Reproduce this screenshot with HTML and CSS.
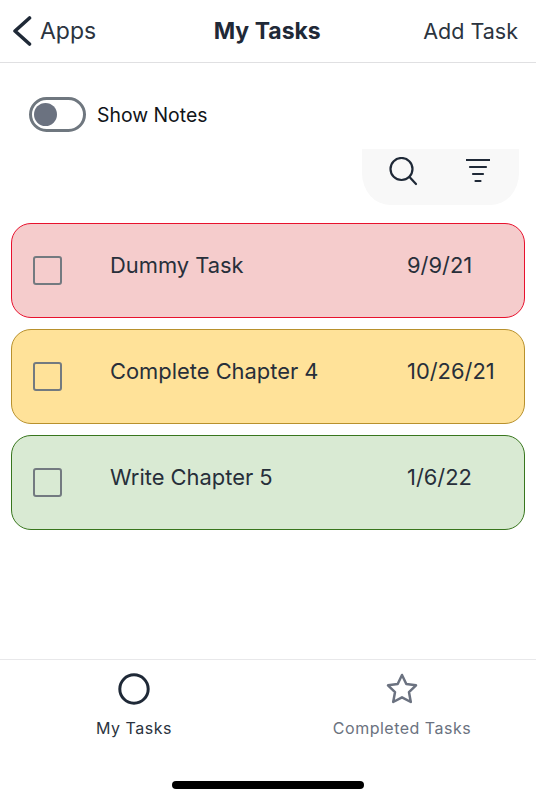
FILE: index.html
```html
<!DOCTYPE html>
<html lang="en">
<head>
  <meta charset="UTF-8">
  <meta name="viewport" content="width=device-width, initial-scale=1.0">
  <title>My Tasks</title>
  <link rel="stylesheet" href="styles.css">
</head>
<body>
  <div class="screen">
    <header class="nav-bar">
      <div class="nav-back">
        <svg class="back-icon" width="20" height="32" viewBox="0 0 20 32"><path d="M17.500 3 L3 16 L17.500 29" /></svg>
        <span>Apps</span>
      </div>
      <div class="nav-title">My Tasks</div>
      <div class="nav-action">Add Task</div>
    </header>

    <main class="content">
      <div class="notes-row">
        <div class="toggle"><div class="toggle-knob"></div></div>
        <span class="notes-label">Show Notes</span>
      </div>

      <div class="tools-row">
        <div class="tools-pill">
          <svg width="30" height="30" viewBox="0 0 30 30"><circle cx="13.500" cy="12" r="11" /><path d="M21.500 20 L28 27" /></svg>
          <svg width="24" height="26" viewBox="0 0 24 26"><path d="M0.500 3 H23.500 M4 10 H20 M7 17 H17 M9.500 24 H14.500" /></svg>
        </div>
      </div>

      <div class="task-list">
        <div class="task task-red">
          <div class="checkbox"></div>
          <div class="task-name">Dummy Task</div>
          <div class="task-date">9/9/21</div>
        </div>
        <div class="task task-yellow">
          <div class="checkbox"></div>
          <div class="task-name">Complete Chapter 4</div>
          <div class="task-date">10/26/21</div>
        </div>
        <div class="task task-green">
          <div class="checkbox"></div>
          <div class="task-name">Write Chapter 5</div>
          <div class="task-date">1/6/22</div>
        </div>
      </div>
    </main>

    <footer class="tab-bar">
      <div class="tabs">
        <div class="tab tab-active">
          <svg width="32" height="32" viewBox="0 0 32 32"><circle cx="16" cy="16" r="14.200" /></svg>
          <span>My Tasks</span>
        </div>
        <div class="tab">
          <svg width="34" height="32" viewBox="0 0 34 32"><path d="M17 2 L21.300 11 L31 12.300 L24 19.200 L25.800 29 L17 24.300 L8.200 29 L10 19.200 L3 12.300 L12.700 11 Z" /></svg>
          <span>Completed Tasks</span>
        </div>
      </div>
      <div class="home-bar"></div>
    </footer>
  </div>
</body>
</html>
```

FILE: styles.css
```css
body {
  margin: 0;
  background: white;
  font-family: Inter, "Liberation Sans", sans-serif;
  color: #1f2937;
}
svg {
  display: block;
  fill: none;
  stroke: #1f2937;
}
.screen {
  width: 536px;
  height: 796px;
  display: flex;
  flex-direction: column;
  overflow: hidden;
}

.nav-bar {
  height: 62px;
  box-sizing: content-box;
  border-bottom: 1px solid #e0e0e2;
  display: flex;
  align-items: center;
  justify-content: space-between;
  padding: 0 18px 0 12px;
  font-size: 23px;
}
.nav-back {
  display: flex;
  align-items: center;
  gap: 8px;
  color: #2b3440;
}
.back-icon path {
  stroke-width: 3.600;
  stroke-linecap: round;
  stroke-linejoin: round;
}
.nav-title {
  font-weight: 700;
  font-size: 23px;
  margin-left: 15px;
}
.nav-action {
  font-size: 21.500px;
  color: #2b3440;
}

.content {
  flex: 1;
  padding: 0 11px;
}
.notes-row {
  display: flex;
  align-items: center;
  gap: 11px;
  margin: 34px 0 0 18px;
}
.toggle {
  width: 57px;
  height: 35px;
  box-sizing: border-box;
  border: 3px solid #6f777f;
  border-radius: 18px;
  padding: 3px 0 0 2px;
}
.toggle-knob {
  width: 23px;
  height: 23px;
  border-radius: 50%;
  background: #6b7280;
}
.notes-label {
  font-size: 19.400px;
  color: #111418;
}

.tools-row {
  display: flex;
  justify-content: flex-end;
  margin: 17px 6px 0 0;
}
.tools-pill {
  width: 157px;
  height: 56px;
  background: #f8f8f8;
  border-radius: 0 0 28px 28px / 0 0 32px 32px;
  display: flex;
  align-items: flex-start;
  padding: 8px 0 0 26px;
  box-sizing: border-box;
  gap: 48px;
}
.tools-pill svg {
  stroke-width: 2.200;
  stroke-linecap: round;
}

.task-list {
  margin-top: 18px;
  display: flex;
  flex-direction: column;
  gap: 11px;
}
.task {
  height: 95px;
  box-sizing: border-box;
  border: 1.500px solid;
  border-radius: 20px;
  display: flex;
  align-items: center;
  padding-left: 21px;
  font-size: 21.900px;
  color: #272f3a;
}
.task-red {
  background: #f5cccc;
  border-color: #e8112d;
}
.task-yellow {
  background: #ffe299;
  border-color: #b8912d;
}
.task-green {
  background: #d9ead3;
  border-color: #38761d;
}
.checkbox {
  width: 29px;
  height: 29px;
  box-sizing: border-box;
  border: 2.500px solid #737a80;
  border-radius: 3px;
  margin-top: -1px;
}
.task-name {
  margin: -11px 0 0 48px;
  width: 297px;
}
.task-date {
  margin-top: -11px;
}

.tab-bar {
  height: 137px;
  border-top: 1px solid #e8e8ea;
  box-sizing: border-box;
}
.tabs {
  display: flex;
  height: 121px;
}
.tab {
  flex: 1;
  display: flex;
  flex-direction: column;
  align-items: center;
  padding-top: 13px;
  font-size: 16px;
  color: #6b7280;
  letter-spacing: 0.500px;
}
.tab span {
  margin-top: 13px;
}
.tab svg {
  stroke: #6b7280;
  stroke-width: 2.500;
  stroke-linejoin: round;
}
.tab-active {
  color: #2b3440;
}
.tab-active svg {
  stroke: #1f2937;
  stroke-width: 3;
}
.home-bar {
  width: 192px;
  height: 8px;
  border-radius: 4px;
  background: black;
  margin-left: 172px;
}
```
